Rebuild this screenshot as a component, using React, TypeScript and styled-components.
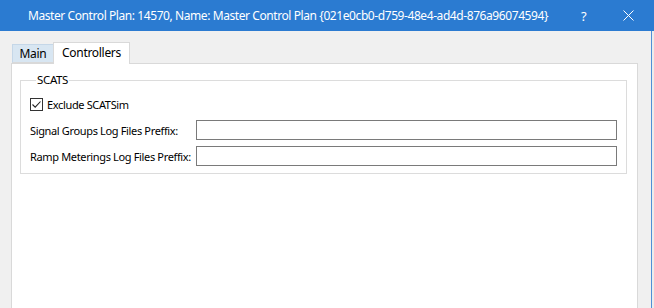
import React from "react";
import styled, { createGlobalStyle } from "styled-components";

const GlobalStyle = createGlobalStyle`
  html, body {
    margin: 0;
    padding: 0;
    background: #f0f0f0;
  }
  body {
    font-family: "Noto Sans", "Open Sans", "Liberation Sans", sans-serif;
    font-size: 12px;
    letter-spacing: -0.42px;
    color: #000;
  }
  * { box-sizing: border-box; }
`;

const Window = styled.div`
  width: 654px;
  height: 308px;
  display: flex;
  flex-direction: column;
  overflow: hidden;
  background: #f0f0f0;
`;

const TitleBar = styled.div`
  height: 31px;
  flex: none;
  display: flex;
  align-items: stretch;
  background: #2b7bd1;
  color: #fff;
  padding: 0 3px 0 28px;
`;

const Title = styled.div`
  flex: 1;
  display: flex;
  align-items: center;
  font-size: 12px;
  white-space: nowrap;
  padding-bottom: 1px;
`;

const CaptionButton = styled.div`
  width: 45px;
  display: flex;
  align-items: center;
  justify-content: center;
  font-size: 13px;
  color: #fff;
`;

const Body = styled.div`
  flex: 1;
  display: flex;
  min-height: 0;
`;

const Content = styled.div`
  flex: 1;
  display: flex;
  flex-direction: column;
  padding: 11px 13px 0 11px;
  min-height: 0;
  font-size: 11px;
  letter-spacing: -0.35px;
`;

const Edge = styled.div`
  width: 3px;
  flex: none;
  border-left: 1px solid #4f8fd6;
  background: #ececec;
`;

const TabStrip = styled.div`
  display: flex;
  align-items: flex-end;
  padding-left: 1px;
  height: 21px;
  flex: none;
  position: relative;
  z-index: 1;
`;

const Tab = styled.div<{ $active?: boolean }>`
  display: flex;
  align-items: center;
  justify-content: center;
  height: ${(p) => (p.$active ? "22px" : "19px")};
  margin-bottom: ${(p) => (p.$active ? "-1px" : "0")};
  padding: ${(p) => (p.$active ? "0 0 2px 0" : "0")};
  width: ${(p) => (p.$active ? "77px" : "41px")};
  background: ${(p) => (p.$active ? "#ffffff" : "#d8e6f2")};
  border: 1px solid ${(p) => (p.$active ? "#d9d9d9" : "#c5d7e8")};
  border-bottom: ${(p) => (p.$active ? "none" : "1px solid #d9d9d9")};
  ${(p) => (p.$active ? "" : "border-right: none;")}
  font-size: 12px;
  letter-spacing: -0.3px;
`;

const Panel = styled.div`
  flex: 1;
  background: #fff;
  border: 1px solid #d9d9d9;
  border-bottom: none;
  padding: 8px 10px 0 8px;
`;

const GroupBox = styled.fieldset`
  margin: 0;
  border: 1px solid #dcdcdc;
  padding: 6px 9px 7px 9px;
  display: flex;
  flex-direction: column;
  gap: 6px;
`;

const Legend = styled.legend`
  padding: 0 1px;
  margin-left: 6px;
  line-height: 16px;
  font-size: 11.5px;
`;

const Row = styled.div`
  height: 20px;
  display: flex;
  align-items: center;
  white-space: nowrap;
`;

const CheckBox = styled.span`
  width: 13px;
  height: 13px;
  border: 1px solid #333;
  background: #fff;
  display: flex;
  align-items: center;
  justify-content: center;
  margin-right: 4px;
  flex: none;
`;

const Label = styled.span`
  width: 166px;
  flex: none;
`;

const TextInput = styled.div`
  flex: 1;
  height: 20px;
  border: 1px solid #7a7a7a;
  background: #fff;
`;

export default function App() {
  return (
    <>
      <GlobalStyle />
      <Window>
        <TitleBar>
          <Title>
            Master Control Plan: 14570, Name: Master Control Plan {"{021e0cb0-d759-48e4-ad4d-876a96074594}"}
          </Title>
          <CaptionButton>?</CaptionButton>
          <CaptionButton>
            <svg width="11" height="11" viewBox="0 0 11 11">
              <path d="M0.5 0.5 L10.5 10.5 M10.5 0.5 L0.5 10.5" stroke="#fff" strokeWidth="1" fill="none" />
            </svg>
          </CaptionButton>
        </TitleBar>
        <Body>
          <Content>
            <TabStrip>
              <Tab>Main</Tab>
              <Tab $active>Controllers</Tab>
            </TabStrip>
            <Panel>
              <GroupBox>
                <Legend>SCATS</Legend>
                <Row>
                  <CheckBox>
                    <svg width="11" height="11" viewBox="0 0 11 11">
                      <path d="M1.5 5.5 L4.2 8.2 L9.5 2.5" stroke="#222" strokeWidth="1.1" fill="none" />
                    </svg>
                  </CheckBox>
                  Exclude SCATSim
                </Row>
                <Row>
                  <Label>Signal Groups Log Files Preffix:</Label>
                  <TextInput />
                </Row>
                <Row>
                  <Label>Ramp Meterings Log Files Preffix:</Label>
                  <TextInput />
                </Row>
              </GroupBox>
            </Panel>
          </Content>
          <Edge />
        </Body>
      </Window>
    </>
  );
}
